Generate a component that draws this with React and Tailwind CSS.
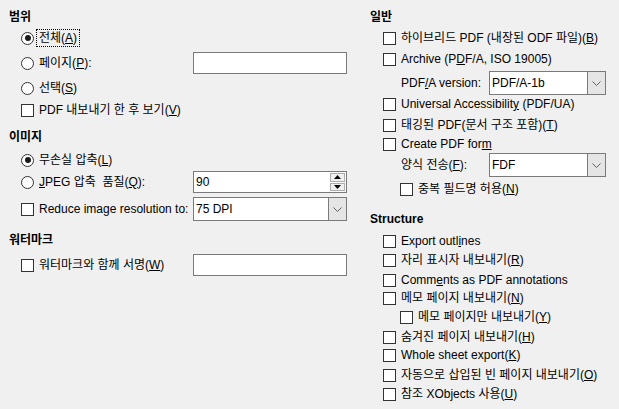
const FONT = { fontFamily: '"Liberation Sans", "Noto Sans CJK KR", sans-serif' };

const Box = ({ checked }) => (
  <span className="w-[13px] h-[13px] border border-[#333333] bg-white shrink-0 flex items-center justify-center" />
);

const Dot = ({ checked }) => (
  <span className="w-[13px] h-[13px] rounded-full border border-[#333333] bg-white shrink-0 flex items-center justify-center">
    {checked && <span className="w-[6px] h-[6px] rounded-full bg-[#1a1a1a]" />}
  </span>
);

const Check = ({ children, className = "" }) => (
  <div className={`h-[18px] flex items-center gap-[5px] ${className}`}>
    <Box />
    <span className="leading-none whitespace-nowrap">{children}</span>
  </div>
);

const Radio = ({ children, checked, focus }) => (
  <div className="flex items-center gap-[5px]">
    <Dot checked={checked} />
    <span
      className={`leading-none whitespace-nowrap ${focus ? "outline outline-1 outline-dotted outline-black outline-offset-[2px]" : ""}`}
    >
      {children}
    </span>
  </div>
);

const TextBox = ({ value = "", className = "" }) => (
  <div className={`h-[22px] border border-[#7a7a7a] bg-white flex items-center px-[2px] ${className}`}>
    {value}
  </div>
);

const Arrow = ({ up }) => (
  <svg width="7" height="4" viewBox="0 0 7 4">
    {up ? <path d="M0 4 L3.5 0 L7 4 Z" fill="#000" /> : <path d="M0 0 L3.5 4 L7 0 Z" fill="#000" />}
  </svg>
);

const SpinBox = ({ value, className = "" }) => (
  <div className={`h-[22px] border border-[#7a7a7a] bg-white flex items-stretch ${className}`}>
    <div className="flex-1 flex items-center pl-[2px]">{value}</div>
    <div className="w-[17px] flex flex-col gap-[1px] p-[1px]">
      <div className="flex-1 bg-[#f0f0f0] border border-[#adadad] flex items-center justify-center">
        <Arrow up />
      </div>
      <div className="flex-1 bg-[#f0f0f0] border border-[#adadad] flex items-center justify-center">
        <Arrow />
      </div>
    </div>
  </div>
);

const Select = ({ value, className = "" }) => (
  <div className={`h-[24px] border border-[#7a7a7a] bg-white flex items-stretch ${className}`}>
    <div className="flex-1 flex items-center pl-[2px]">{value}</div>
    <div className="w-[18px] bg-[#e5e5e5] border-l border-[#7a7a7a] flex items-center justify-center">
      <svg width="9" height="5" viewBox="0 0 9 5">
        <path d="M0.5 0.5 L4.5 4.5 L8.5 0.5" fill="none" stroke="#606060" strokeWidth="1" />
      </svg>
    </div>
  </div>
);

const Heading = ({ children, className = "" }) => (
  <div className={`h-[20px] flex items-center font-bold ${className}`}>{children}</div>
);

export default function App() {
  return (
    <div
      className="w-[619px] h-[409px] bg-[#f0f0f0] text-[12px] text-black flex overflow-hidden"
      style={FONT}
    >
      {/* left column */}
      <div className="w-[360px] pl-[9px] pt-[7px] flex flex-col">
        <Heading>범위</Heading>
        <div className="h-[20px] mt-[1px] pl-[12px] flex items-center">
          <Radio checked focus>
            전체(<u>A</u>)
          </Radio>
        </div>
        <div className="h-[22px] mt-[4px] pl-[12px] flex items-center">
          <div className="w-[172px]">
            <Radio>
              페이지(<u>P</u>):
            </Radio>
          </div>
          <TextBox className="w-[154px]" />
        </div>
        <div className="h-[20px] mt-[4px] pl-[12px] flex items-center">
          <Radio>
            선택(<u>S</u>)
          </Radio>
        </div>
        <div className="h-[20px] mt-[2px] pl-[12px] flex items-center">
          <Check>
            PDF 내보내기 한 후 보기(<u>V</u>)
          </Check>
        </div>

        <Heading className="mt-[7px]">이미지</Heading>
        <div className="h-[20px] mt-[3px] pl-[12px] flex items-center">
          <Radio checked>
            무손실 압축(<u>L</u>)
          </Radio>
        </div>
        <div className="h-[22px] mt-[1px] pl-[12px] flex items-center">
          <div className="w-[172px]">
            <Radio>
              <u>J</u>PEG 압축&nbsp; 품질(<u>Q</u>):
            </Radio>
          </div>
          <SpinBox value="90" className="w-[154px]" />
        </div>
        <div className="h-[24px] mt-[4px] pl-[12px] flex items-center">
          <div className="w-[172px]">
            <Check>
              Reduce ima<u>g</u>e resolution to:
            </Check>
          </div>
          <Select value="75 DPI" className="w-[154px]" />
        </div>

        <Heading className="mt-[9px]">워터마크</Heading>
        <div className="h-[22px] mt-[4px] pl-[12px] flex items-center">
          <div className="w-[172px]">
            <Check>
              워터마크와 함께 서명(<u>W</u>)
            </Check>
          </div>
          <TextBox className="w-[154px]" />
        </div>
      </div>

      {/* right column */}
      <div className="flex-1 pl-[10px] pt-[7px] flex flex-col">
        <Heading>일반</Heading>
        <Check className="mt-[2px] pl-[13px]">
          하이브리드 PDF (내장된 ODF 파일)(<u>B</u>)
        </Check>
        <Check className="mt-[3px] pl-[13px]">
          Archive (P<u>D</u>F/A, ISO 19005)
        </Check>
        <div className="h-[24px] mt-[3px] pl-[31px] flex items-center">
          <span className="w-[88px] whitespace-nowrap">
            PDF<u>/</u>A version:
          </span>
          <Select value="PDF/A-1b" className="w-[117px]" />
        </div>
        <Check className="mt-[0px] pl-[13px]">
          Universal Accessibilit<u>y</u> (PDF/UA)
        </Check>
        <Check className="mt-[3px] pl-[13px]">
          태깅된 PDF(문서 구조 포함)(<u>T</u>)
        </Check>
        <Check className="mt-[1px] pl-[13px]">
          Create PDF for<u>m</u>
        </Check>
        <div className="h-[24px] pl-[31px] flex items-center">
          <span className="w-[88px] whitespace-nowrap">
            양식 전송(<u>F</u>):
          </span>
          <Select value="FDF" className="w-[117px]" />
        </div>
        <Check className="mt-[3px] pl-[30px]">
          중복 필드명 허용(<u>N</u>)
        </Check>

        <Heading className="mt-[11px]">Structure</Heading>
        <Check className="mt-[3px] pl-[13px]">
          Export outl<u>i</u>nes
        </Check>
        <Check className="mt-[1px] pl-[13px]">
          자리 표시자 내보내기(<u>R</u>)
        </Check>
        <Check className="mt-[2px] pl-[13px]">
          Comm<u>e</u>nts as PDF annotations
        </Check>
        <Check className="mt-[0px] pl-[13px]">
          메모 페이지 내보내기(<u>N</u>)
        </Check>
        <Check className="mt-[1px] pl-[30px]">
          메모 페이지만 내보내기(<u>Y</u>)
        </Check>
        <Check className="mt-[2px] pl-[13px]">
          숨겨진 페이지 내보내기(<u>H</u>)
        </Check>
        <Check className="mt-[0px] pl-[13px]">
          Whole sheet export(<u>K</u>)
        </Check>
        <Check className="mt-[2px] pl-[13px]">
          자동으로 삽입된 빈 페이지 내보내기(<u>O</u>)
        </Check>
        <Check className="mt-[1px] pl-[13px]">
          참조 XObjects 사용(<u>U</u>)
        </Check>
      </div>
    </div>
  );
}
